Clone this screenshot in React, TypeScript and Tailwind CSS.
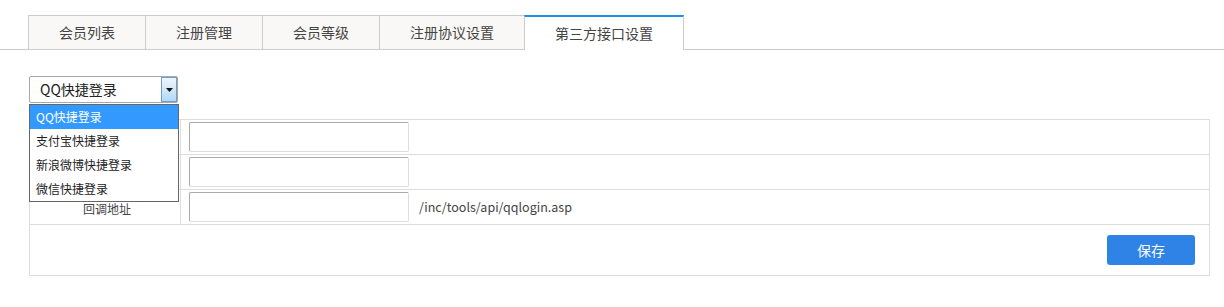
const FONT = "font-['Microsoft_YaHei','Noto_Sans_CJK_SC',sans-serif]";

const tabs = ["会员列表", "注册管理", "会员等级", "注册协议设置", "第三方接口设置"];
const tabWidths = ["w-[117px]", "w-[117px]", "w-[117px]", "w-[145px]", "w-[160px]"];
const options = ["QQ快捷登录", "支付宝快捷登录", "新浪微博快捷登录", "微信快捷登录"];

export default function App() {
  const active = 4;
  return (
    <div className={`relative h-[307px] w-[1224px] overflow-hidden bg-white text-[#333] ${FONT}`}>
      {/* Tabs */}
      <div className="flex border-b border-[#ccc] pl-[28px] pt-[15px]">
        {tabs.map((t, i) =>
          i === active ? (
            <div
              key={t}
              className={`${tabWidths[i]} -mb-px flex h-[35px] items-center justify-center border-t-2 border-r border-l border-t-[#1a8ff0] border-r-[#ccc] border-l-[#ccc] bg-white text-[14px] text-[#444]`}
            >
              {t}
            </div>
          ) : (
            <div
              key={t}
              className={`${tabWidths[i]} flex h-[34px] items-center justify-center border-t border-l border-[#ccc] bg-[#f9f8f6] text-[14px] text-[#444]`}
            >
              {t}
            </div>
          ),
        )}
      </div>

      <div className="pl-[29px] pr-[14px] pt-[26px]">
        {/* Select */}
        <div className="flex h-[27px] w-[149px] items-stretch rounded-[2px] border border-[#a8a8a8] bg-white">
          <div className="flex flex-1 items-center pl-[10px] text-[14px] text-[#222]">QQ快捷登录</div>
          <div className="flex w-[16px] items-center justify-center border border-[#6f9fcb] bg-gradient-to-b from-[#eef6fd] to-[#b3d8f4]">
            <svg width="7" height="4" viewBox="0 0 7 4">
              <path d="M0 0h7L3.5 4z" fill="#111" />
            </svg>
          </div>
        </div>

        {/* Form table */}
        <div className="mt-[16px] border border-[#ddd] text-[12px]">
          {["", "", "回调地址"].map((label, i) => (
            <div key={i} className="flex h-[35px] border-b border-[#ddd]">
              <div className="flex w-[151px] items-center justify-center border-r border-[#ddd] pt-[4px] pl-[4px] text-[12px] text-[#444]">
                {label}
              </div>
              <div className="flex items-center pl-[8px]">
                <input className="h-[30px] w-[220px] rounded-[2px] border border-[#ddd] border-t-[#aaa] border-l-[#aaa] outline-none" />
                {i === 2 && (
                  <span className="ml-[10px] text-[12.5px] text-[#444]">/inc/tools/api/qqlogin.asp</span>
                )}
              </div>
            </div>
          ))}
          <div className="flex h-[50px] items-start justify-end pr-[14px] pt-[10px]">
            <button className="h-[30px] w-[88px] rounded-[3px] bg-[#2f83e6] text-[14px] text-white">保存</button>
          </div>
        </div>
      </div>

      {/* Open dropdown list */}
      <div className="absolute left-[29px] top-[104px] w-[150px] border border-[#666] bg-white text-[12px] text-[#222]">
        {options.map((o, i) => (
          <div
            key={o}
            className={`flex h-[24px] items-center pl-[6px] ${i === 0 ? "bg-[#3399ff] text-white" : ""}`}
          >
            {o}
          </div>
        ))}
      </div>
    </div>
  );
}
